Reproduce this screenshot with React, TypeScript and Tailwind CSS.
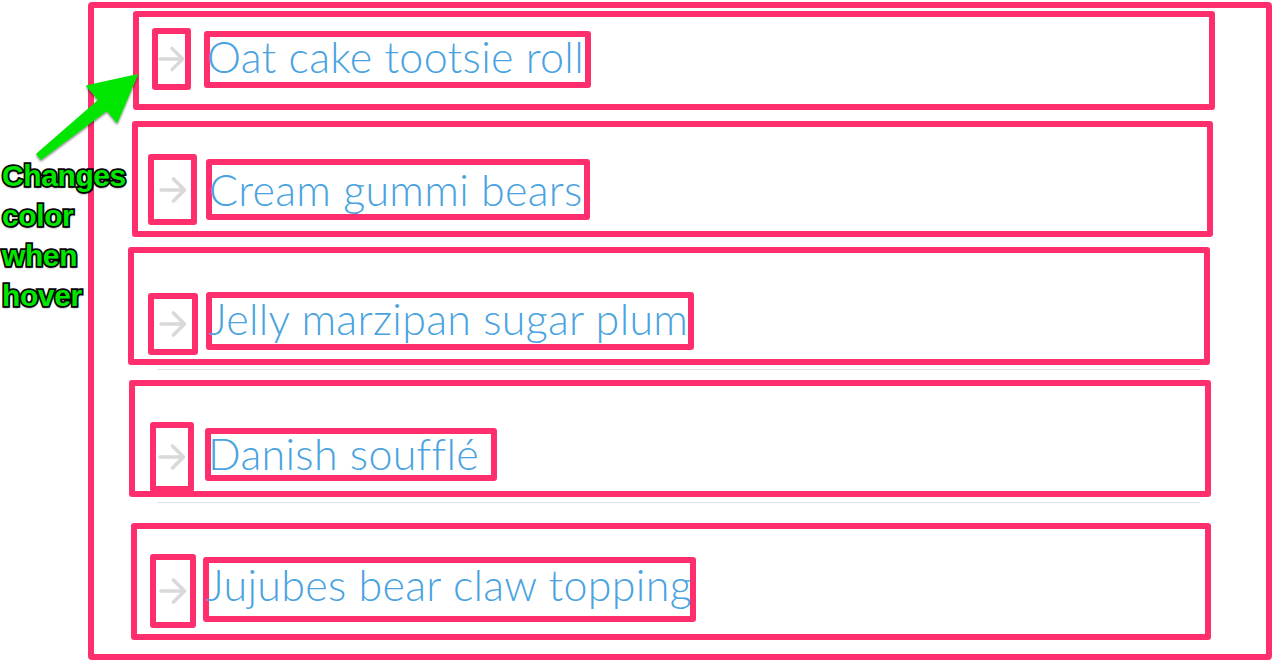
import React from 'react';

type Item = {
  label: string;
  row: string;
  arrow: string;
  text: string;
  inner: string;
  sepAfter?: string;
};

const items: Item[] = [
  {
    label: 'Oat cake tootsie roll',
    row: 'ml-[39px] mt-[3px] w-[1082px] h-[99px]',
    arrow: 'ml-[13px] mt-[11px] w-[39px] h-[62px]',
    text: 'ml-[13px] mt-[14px] w-[387px] h-[57px]',
    inner: '-mt-[2px]',
  },
  {
    label: 'Cream gummi bears',
    row: 'ml-[38px] mt-[11px] w-[1081px] h-[116px]',
    arrow: 'ml-[10px] mt-[27px] w-[49px] h-[71px]',
    text: 'ml-[9px] mt-[32px] w-[384px] h-[61px]',
    inner: 'mt-[3px]',
  },
  {
    label: 'Jelly marzipan sugar plum',
    row: 'ml-[34px] mt-[10px] w-[1082px] h-[118px]',
    arrow: 'ml-[14px] mt-[40px] w-[50px] h-[62px]',
    text: 'ml-[8px] mt-[39px] w-[488px] h-[58px]',
    inner: '-mt-[1px]',
    sepAfter: 'mt-[4px]',
  },
  {
    label: 'Danish soufflé',
    row: 'ml-[35px] mt-[10px] w-[1082px] h-[117px]',
    arrow: 'ml-[15px] mt-[36px] w-[44px] h-[70px]',
    text: 'ml-[11px] mt-[42px] w-[292px] h-[53px]',
    inner: '-mt-[2px]',
    sepAfter: 'mt-[5px]',
  },
  {
    label: 'Jujubes bear claw topping',
    row: 'ml-[37px] mt-[20px] w-[1080px] h-[117px]',
    arrow: 'ml-[13px] mt-[25px] w-[46px] h-[74px]',
    text: 'ml-[7px] mt-[28px] w-[493px] h-[65px]',
    inner: 'mt-0',
  },
];

// ── Gray arrow glyph ─────────────────────────────────────────────────────────

function ArrowGlyph() {
  return (
    <svg width="28" height="26" viewBox="0 0 28 26" fill="none" className="text-[#d9d9d9] group-hover:text-[#4aa3df] transition-colors">
      <path
        d="M2 13 H25.5 M14.5 2 L25.5 13 L14.5 24"
        stroke="currentColor"
        strokeWidth="3.6"
        strokeLinecap="round"
        strokeLinejoin="round"
      />
    </svg>
  );
}

// ── Annotation overlay (arrow + label) ───────────────────────────────────────

function Annotation() {
  return (
    <>
      <svg
        className="absolute left-0 top-0 pointer-events-none"
        width="1281"
        height="664"
        viewBox="0 0 1281 664"
      >
        <defs>
          <filter id="shadow" x="-20%" y="-20%" width="140%" height="140%">
            <feDropShadow dx="0" dy="1.5" stdDeviation="1" floodColor="#000" floodOpacity="0.55" />
          </filter>
        </defs>
        <polygon
          points="137,75 87,86 99,100 37,154 41,159 107,110 117,122"
          fill="#00e600"
          stroke="#00e600"
          strokeWidth="1.5"
          strokeLinejoin="round"
          filter="url(#shadow)"
        />
      </svg>
      <div
        className="absolute left-[2px] top-[156px] text-[30px] leading-[40px] font-bold text-[#00e600] tracking-[-0.4px] pointer-events-none"
        style={{
          fontFamily: '"Liberation Sans", Arial, sans-serif',
          WebkitTextStroke: '3.5px #000',
          paintOrder: 'stroke fill',
          textShadow: '0 2px 2px rgba(0,0,0,0.6)',
        }}
      >
        <div>Changes</div>
        <div>color</div>
        <div>when</div>
        <div>hover</div>
      </div>
    </>
  );
}

export default function App() {
  return (
    <div className="relative w-[1281px] h-[664px] bg-white overflow-hidden">
      {/* List wrapper */}
      <div className="ml-[88px] pt-[2px]">
        <div className="w-[1184px] h-[658px] border-[6px] border-[#ff2f6e] rounded-[4px]">
          {items.map((item) => (
            <React.Fragment key={item.label}>
              <a
                href="#"
                className={`group flex items-start shrink-0 border-[6px] border-[#ff2f6e] rounded-[3px] ${item.row}`}
              >
                <div
                  className={`flex items-center justify-center shrink-0 border-[6px] border-[#ff2f6e] rounded-[3px] ${item.arrow}`}
                >
                  <ArrowGlyph />
                </div>
                <div className={`shrink-0 border-[6px] border-[#ff2f6e] rounded-[3px] ${item.text}`}>
                  <div
                    className={`-ml-[3px] whitespace-nowrap text-[43px] leading-[43px] font-light tracking-[0.3px] text-[#4aa3df] ${item.inner}`}
                    style={{ fontFamily: 'Lato, "Open Sans", sans-serif' }}
                  >
                    {item.label}
                  </div>
                </div>
              </a>
              {item.sepAfter && (
                <div className={`ml-[63px] w-[1043px] h-px bg-[#e2e2e2] ${item.sepAfter}`} />
              )}
            </React.Fragment>
          ))}
        </div>
      </div>

      <Annotation />
    </div>
  );
}
